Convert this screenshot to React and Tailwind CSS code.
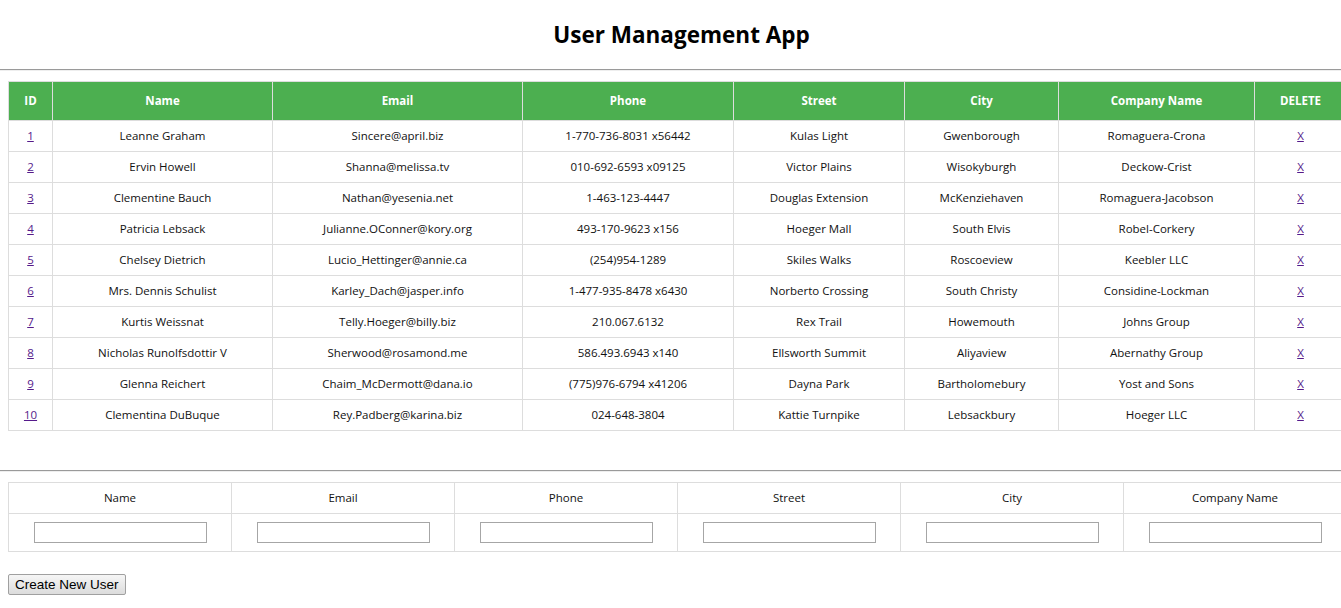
import React from "react";

const users = [
  [1, "Leanne Graham", "Sincere@april.biz", "1-770-736-8031 x56442", "Kulas Light", "Gwenborough", "Romaguera-Crona"],
  [2, "Ervin Howell", "Shanna@melissa.tv", "010-692-6593 x09125", "Victor Plains", "Wisokyburgh", "Deckow-Crist"],
  [3, "Clementine Bauch", "Nathan@yesenia.net", "1-463-123-4447", "Douglas Extension", "McKenziehaven", "Romaguera-Jacobson"],
  [4, "Patricia Lebsack", "Julianne.OConner@kory.org", "493-170-9623 x156", "Hoeger Mall", "South Elvis", "Robel-Corkery"],
  [5, "Chelsey Dietrich", "Lucio_Hettinger@annie.ca", "(254)954-1289", "Skiles Walks", "Roscoeview", "Keebler LLC"],
  [6, "Mrs. Dennis Schulist", "Karley_Dach@jasper.info", "1-477-935-8478 x6430", "Norberto Crossing", "South Christy", "Considine-Lockman"],
  [7, "Kurtis Weissnat", "Telly.Hoeger@billy.biz", "210.067.6132", "Rex Trail", "Howemouth", "Johns Group"],
  [8, "Nicholas Runolfsdottir V", "Sherwood@rosamond.me", "586.493.6943 x140", "Ellsworth Summit", "Aliyaview", "Abernathy Group"],
  [9, "Glenna Reichert", "Chaim_McDermott@dana.io", "(775)976-6794 x41206", "Dayna Park", "Bartholomebury", "Yost and Sons"],
  [10, "Clementina DuBuque", "Rey.Padberg@karina.biz", "024-648-3804", "Kattie Turnpike", "Lebsackbury", "Hoeger LLC"],
];

const cols = [
  ["ID", "w-[44px]"],
  ["Name", "w-[220px]"],
  ["Email", "w-[250px]"],
  ["Phone", "w-[211px]"],
  ["Street", "w-[171px]"],
  ["City", "w-[154px]"],
  ["Company Name", "w-[196px]"],
  ["DELETE", "w-[92px]"],
];

const formCols = ["Name", "Email", "Phone", "Street", "City", "Company Name"];

function Rule() {
  return <div className="w-full h-[2px] border-t border-[#9a9a9a] border-b border-b-[#eeeeee]" />;
}

export default function App() {
  return (
    <div className="w-[1341px] overflow-hidden bg-white text-[#111] text-[11.5px] font-['Open_Sans',sans-serif]">
      <h1 className="pt-[19px] pl-[22px] h-[69px] text-center text-[22.5px] font-bold text-black leading-[32px]">
        User Management App
      </h1>
      <Rule />
      <div className="pt-[10px] pl-[8px]">
        <table className="border-collapse table-fixed w-[1338px]">
          <thead>
            <tr className="h-[39px] bg-[#4CAF50] text-white">
              {cols.map(([c, w]) => (
                <th key={c} className={`${w} border border-[#dddddd] font-bold text-center`}>
                  {c}
                </th>
              ))}
            </tr>
          </thead>
          <tbody>
            {users.map((u) => (
              <tr key={u[0]} className="h-[31px]">
                <td className="border border-[#dddddd] text-center">
                  <a href="#" className="text-[#551A8B] underline">{u[0]}</a>
                </td>
                {u.slice(1).map((v, i) => (
                  <td key={i} className="border border-[#dddddd] text-center">{v}</td>
                ))}
                <td className="border border-[#dddddd] text-center">
                  <a href="#" className="text-[#551A8B] underline">X</a>
                </td>
              </tr>
            ))}
          </tbody>
        </table>
      </div>
      <div className="h-[39px]" />
      <Rule />
      <div className="pt-[10px] pl-[8px]">
        <table className="border-collapse table-fixed w-[1338px]">
          <tbody>
            <tr className="h-[31px]">
              {formCols.map((c) => (
                <td key={c} className="w-[223px] border border-[#dddddd] text-center">{c}</td>
              ))}
            </tr>
            <tr className="h-[38px]">
              {formCols.map((c) => (
                <td key={c} className="border border-[#dddddd] text-center align-middle">
                  <input type="text" className="w-[173px] h-[21px] border border-[#a6a6a6] bg-white align-middle" />
                </td>
              ))}
            </tr>
          </tbody>
        </table>
      </div>
      <div className="pt-[22px] pl-[8px] pb-[13px]">
        <button className="h-[21px] px-[6px] border border-[#a0a0a0] rounded-[2px] bg-gradient-to-b from-[#f6f6f6] to-[#dcdcdc] text-[13.5px] text-black font-['Liberation_Sans',Arial,sans-serif] leading-none">
          Create New User
        </button>
      </div>
    </div>
  );
}
